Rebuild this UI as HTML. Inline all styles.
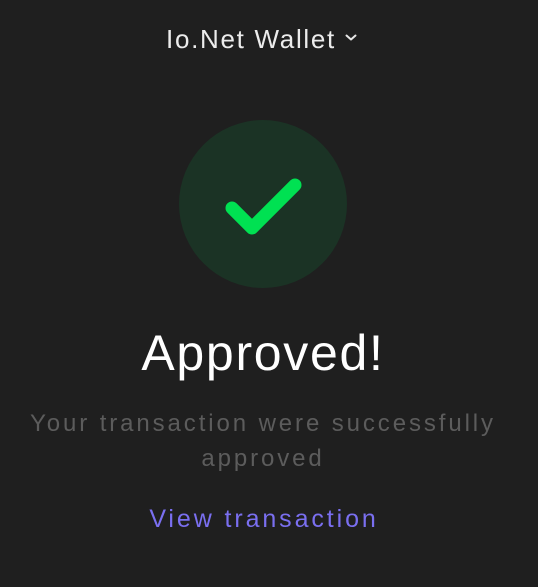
<!DOCTYPE html>
<html><head><meta charset="utf-8"><style>
html,body{margin:0;padding:0;background:#1f1f1f;width:538px;height:587px;overflow:hidden;font-family:"Liberation Sans",sans-serif}
.t{position:absolute;left:0;width:538px;text-align:center;white-space:nowrap}
</style></head><body>
<div class="t" style="top:24px;left:-18px;font-size:26px;color:#ececec;line-height:30px;letter-spacing:1.7px">Io.Net Wallet</div>
<svg style="position:absolute;left:344px;top:33px" width="14" height="10" viewBox="0 0 14 10"><path d="M2.5 2.5 L7 6.5 L11.5 2.5" fill="none" stroke="#e6e6e6" stroke-width="2" stroke-linecap="round" stroke-linejoin="round"/></svg>
<svg style="position:absolute;left:179px;top:120px" width="168" height="168" viewBox="0 0 168 168"><circle cx="84" cy="84" r="84" fill="#1b3325"/><path d="M53 88 L73 108 L116 65" fill="none" stroke="#00e152" stroke-width="13" stroke-linecap="round" stroke-linejoin="round"/></svg>
<div class="t" style="top:325px;left:-6px;font-size:50px;color:#fff;line-height:56px;letter-spacing:1.7px">Approved!</div>
<div class="t" style="top:406px;left:-6px;font-size:24px;color:#5c5c5c;line-height:35px;letter-spacing:2.9px">Your transaction were successfully<br>approved</div>
<div class="t" style="top:503px;left:-5px;font-size:25px;color:#7a6ff0;line-height:32px;letter-spacing:2.9px">View transaction</div>
</body></html>
